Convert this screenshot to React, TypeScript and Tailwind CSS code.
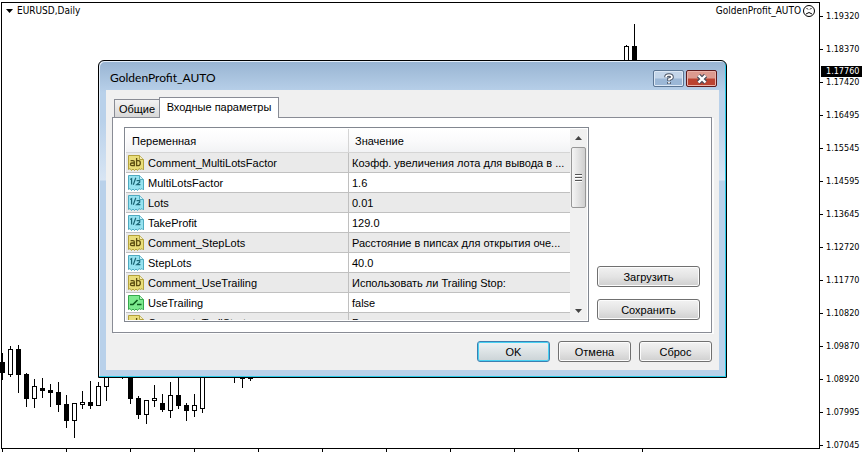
import { useState } from 'react'

type Candle = { x: number; high: number; low: number; top: number; bottom: number; up?: boolean }

const candles: Candle[] = [
  { x: 2, high: 353, low: 379, top: 362, bottom: 372 },
  { x: 10, high: 346, low: 376, top: 349, bottom: 374, up: true },
  { x: 18, high: 345, low: 392, top: 349, bottom: 374 },
  { x: 26, high: 373, low: 406, top: 374, bottom: 398 },
  { x: 34, high: 379, low: 407, top: 386, bottom: 398, up: true },
  { x: 42, high: 378, low: 397, top: 388, bottom: 390 },
  { x: 50, high: 384, low: 406, top: 390, bottom: 392 },
  { x: 58, high: 382, low: 411, top: 392, bottom: 404 },
  { x: 66, high: 395, low: 427, top: 404, bottom: 420 },
  { x: 74, high: 403, low: 437, top: 403, bottom: 420, up: true },
  { x: 82, high: 391, low: 408, top: 402, bottom: 404, up: true },
  { x: 90, high: 381, low: 408, top: 402, bottom: 405 },
  { x: 98, high: 382, low: 405, top: 386, bottom: 405, up: true },
  { x: 106, high: 365, low: 400, top: 370, bottom: 386, up: true },
  { x: 122, high: 360, low: 378, top: 362, bottom: 370 },
  { x: 130, high: 360, low: 403, top: 365, bottom: 398 },
  { x: 138, high: 396, low: 418, top: 398, bottom: 414 },
  { x: 146, high: 400, low: 423, top: 400, bottom: 414, up: true },
  { x: 154, high: 385, low: 406, top: 398, bottom: 400, up: true },
  { x: 162, high: 394, low: 411, top: 403, bottom: 409 },
  { x: 170, high: 382, low: 417, top: 395, bottom: 410, up: true },
  { x: 178, high: 370, low: 408, top: 395, bottom: 405 },
  { x: 186, high: 403, low: 420, top: 405, bottom: 410 },
  { x: 194, high: 394, low: 416, top: 405, bottom: 410, up: true },
  { x: 202, high: 360, low: 412, top: 365, bottom: 408, up: true },
  { x: 234, high: 360, low: 382, top: 362, bottom: 370 },
  { x: 242, high: 360, low: 387, top: 365, bottom: 378 },
  { x: 250, high: 360, low: 380, top: 365, bottom: 378 },
  { x: 626, high: 45, low: 80, top: 46, bottom: 75, up: true },
  { x: 634, high: 24, low: 90, top: 46, bottom: 85 },
]

const prices = [
  '1.19320', '1.18370', '1.17420', '1.16495', '1.15545', '1.14595', '1.13645',
  '1.12720', '1.11770', '1.10820', '1.09870', '1.08920', '1.07995', '1.07045',
]

type Kind = 'text' | 'number' | 'bool'

const params: { kind: Kind; name: string; value: string }[] = [
  { kind: 'text', name: 'Comment_MultiLotsFactor', value: 'Коэфф. увеличения лота для вывода в ...' },
  { kind: 'number', name: 'MultiLotsFactor', value: '1.6' },
  { kind: 'number', name: 'Lots', value: '0.01' },
  { kind: 'number', name: 'TakeProfit', value: '129.0' },
  { kind: 'text', name: 'Comment_StepLots', value: 'Расстояние в пипсах для открытия оче...' },
  { kind: 'number', name: 'StepLots', value: '40.0' },
  { kind: 'text', name: 'Comment_UseTrailing', value: 'Использовать ли Trailing Stop:' },
  { kind: 'bool', name: 'UseTrailing', value: 'false' },
  { kind: 'text', name: 'Comment_TrailStart', value: 'Расстояние' },
]

const uiFont = "font-['Liberation_Sans',Arial,sans-serif]"
const chartFont = "font-['DejaVu_Sans_Condensed','DejaVu_Sans',sans-serif]"

const buttonClass =
  'h-[21px] rounded-[3px] border border-[#707070] bg-linear-to-b from-[#f2f2f2] via-[#e4e4e4] to-[#cfcfcf] text-center text-[11px] leading-[18px] text-black shadow-[inset_0_0_0_1px_#fcfcfc]'

function ParamIcon({ kind }: { kind: Kind }) {
  const fill = { text: '#e9dd7a', number: '#96e2f0', bool: '#7dea8e' }[kind]
  const edge = { text: '#b3a23c', number: '#4fabc0', bool: '#37a94c' }[kind]
  const ink = { text: '#5b4d10', number: '#1a6675', bool: '#0c5c1c' }[kind]
  return (
    <svg width="16" height="16" viewBox="0 0 16 16" className="block" aria-hidden="true">
      <path
        d="M.5.5h11l4 4v10.500l-1.500-1.500-1.500 1-1.500-1-1.500 2-1.500-1.500-1.500 1.500-1.500-1.500-1.500 1.500-1.500-2-1.500 1z"
        fill={fill}
        stroke={edge}
      />
      <path d="M11.500.5v4h4" fill="#fff" fillOpacity=".5" stroke={edge} />
      {kind === 'text' && (
        <g fill="none" stroke={ink} strokeWidth="1.300">
          <path d="M2.600 5.600h2.400q1.300 0 1.300 1.200V10.600H3.800Q2.400 10.600 2.400 9.300T3.800 8h2.500" />
          <path d="M8.600 3v7.600h1.900q1.800 0 1.800-2.500t-1.800-2.500H8.600" />
        </g>
      )}
      {kind === 'number' && (
        <g fill="none" stroke={ink} strokeWidth="1.200">
          <path d="M2.300 4.600 3.600 3.600V9.500M7.800 2.800 5.300 9.800M8.600 5.600h3.100v1.700L8.800 9.600h3.600" />
        </g>
      )}
      {kind === 'bool' && <path d="M2 9.500h3L9.500 5M9 9.500h4.500" fill="none" stroke={ink} strokeWidth="1.600" />}
    </svg>
  )
}

function Chart() {
  return (
    <svg className="absolute inset-0 h-full w-full" shapeRendering="crispEdges" aria-hidden="true">
      {candles.map((c) => (
        <g key={c.x}>
          <rect x={c.x} y={c.high} width="1" height={c.low - c.high + 1} />
          <rect x={c.x - 2} y={c.top} width="5" height={c.bottom - c.top + 1} />
          {c.up && <rect x={c.x - 1} y={c.top + 1} width="3" height={c.bottom - c.top - 1} fill="#fff" />}
        </g>
      ))}
    </svg>
  )
}

function Scrollbar() {
  return (
    <div className="flex w-[17px] shrink-0 flex-col items-center bg-[#f0f0f0]">
      <button type="button" aria-label="Вверх" className="flex h-[18px] w-full items-center justify-center">
        <svg width="7" height="4" viewBox="0 0 7 4">
          <path d="M3.500 0 7 4H0z" fill="#444" />
        </svg>
      </button>
      <div className="flex h-[61px] w-[15px] flex-col items-center justify-center gap-px rounded-[2px] border border-[#979797] bg-linear-to-r from-[#f5f5f5] to-[#cfcfcf]">
        <span className="h-0.5 w-[7px] border-b border-white bg-[#555]" />
        <span className="h-0.5 w-[7px] border-b border-white bg-[#555]" />
        <span className="h-0.5 w-[7px] border-b border-white bg-[#555]" />
      </div>
      <button type="button" aria-label="Вниз" className="mt-auto flex h-[18px] w-full items-center justify-center">
        <svg width="7" height="4" viewBox="0 0 7 4">
          <path d="M0 0h7L3.500 4z" fill="#444" />
        </svg>
      </button>
    </div>
  )
}

function ParamTable() {
  return (
    <div className="flex h-[195px] min-w-0 flex-1 overflow-hidden border border-[#828790] bg-white p-px">
      <div className="min-w-0 flex-1 overflow-hidden">
        <table className="w-full table-fixed border-separate border-spacing-0 text-left text-[11px] leading-4">
          <thead>
            <tr className="h-6 bg-linear-to-b from-white via-[#fafafb] to-[#f1f2f4]">
              <th className="w-[223px] border-r border-b border-[#d5d5d5] pl-1.5 font-normal">Переменная</th>
              <th className="border-b border-[#d5d5d5] pl-1.5 font-normal">Значение</th>
            </tr>
          </thead>
          <tbody>
            {params.map((p) => (
              <tr key={p.name} className="h-5 odd:bg-[#eaeaea]">
                <td className="border-r border-b border-[#c0c0c0] p-0">
                  <div className="flex items-center gap-1 pl-0.5">
                    <ParamIcon kind={p.kind} />
                    <span>{p.name}</span>
                  </div>
                </td>
                <td className="truncate border-b border-[#c0c0c0] p-0 pl-[3px]">{p.value}</td>
              </tr>
            ))}
          </tbody>
        </table>
      </div>
      <Scrollbar />
    </div>
  )
}

function TitleBar() {
  return (
    <div className="flex h-[29px] items-start justify-between pr-0.5 pl-1">
      <h1 className="pt-[9px] font-['Lato',sans-serif] text-[12px] leading-4 text-black">GoldenProfit_AUTO</h1>
      <div className="flex gap-0.5 pt-[9px]">
        <button
          type="button"
          aria-label="Справка"
          className="flex h-[17px] w-[31px] items-center justify-center rounded-[2px] border border-[#5b7593] bg-linear-to-b from-[#c3d5e9] from-45% to-[#9bb7d6] to-55% shadow-[inset_0_0_0_1px_#dce8f5]"
        >
          <svg width="10" height="12" viewBox="0 0 10 12" fill="none">
            <path d="M2 4.200Q2 2 5 2T8 4.200Q8 5.400 5 6.200V8M5 9v2" stroke="#4b5566" strokeWidth="3.600" />
            <path d="M2 4.200Q2 2 5 2T8 4.200Q8 5.400 5 6.200V7.600M5 9v1.600" stroke="#fff" strokeWidth="1.700" />
          </svg>
        </button>
        <button
          type="button"
          aria-label="Закрыть"
          className="flex h-[17px] w-[31px] items-center justify-center rounded-[2px] border border-[#5c1a1c] bg-linear-to-b from-[#dc9a8f] from-45% to-[#bb4331] to-55% shadow-[inset_0_0_0_1px_#eab3aa]"
        >
          <svg width="12" height="10" viewBox="0 0 12 10" fill="none">
            <path d="M2.500 1.500 9.500 8.500M9.500 1.500 2.500 8.500" stroke="#4b4e5c" strokeWidth="4.600" />
            <path d="M2.500 1.500 9.500 8.500M9.500 1.500 2.500 8.500" stroke="#fff" strokeWidth="2.400" />
          </svg>
        </button>
      </div>
    </div>
  )
}

function ParamsDialog() {
  const [tab, setTab] = useState<'common' | 'inputs'>('inputs')

  return (
    <section
      role="dialog"
      aria-label="GoldenProfit_AUTO"
      className={`absolute top-[60px] right-[93px] left-[98px] rounded-t-[6px] border border-black bg-[linear-gradient(180deg,#98b4d2_0,#b9d1ea_32px,#b9d1ea_60px,#d8e5f4_119px,#b9d1ea_120px)] px-[7px] pb-[7px] text-black shadow-[inset_-1px_-1px_0_#27c9e6,inset_1px_1px_0_#e4eef9] ${uiFont}`}
    >
      <TitleBar />
      <div className="bg-[#f0f0f0] pt-[7px] pr-[7px] pb-2 pl-1.5">
        <div role="tablist" className="flex items-end pl-0.5 text-[11px] leading-4">
          <button
            type="button"
            role="tab"
            aria-selected={tab === 'common'}
            onClick={() => setTab('common')}
            className="h-[18px] w-[45px] border border-r-0 border-b-0 border-[#898c95] bg-linear-to-b from-[#f2f2f2] to-[#d8d8d8]"
          >
            Общие
          </button>
          <button
            type="button"
            role="tab"
            aria-selected={tab === 'inputs'}
            onClick={() => setTab('inputs')}
            className="relative -mb-px h-[21px] w-[120px] border border-b-0 border-[#898c95] bg-white pb-0.5"
          >
            Входные параметры
          </button>
        </div>
        <div
          role="tabpanel"
          className="flex gap-2 border border-[#898c95] bg-white px-[11px] pt-[9px] pb-2.5 shadow-[2px_1px_0_#fcfcfc]"
        >
          <ParamTable />
          <div className="flex w-[103px] flex-col justify-end gap-3 pb-0.5">
            <button type="button" className={buttonClass}>Загрузить</button>
            <button type="button" className={buttonClass}>Сохранить</button>
          </div>
        </div>
        <div className="flex justify-end gap-2 pt-2">
          <button
            type="button"
            className="h-[21px] w-[73px] rounded-[3px] border border-[#3c7fb1] bg-linear-to-b from-[#eef3f5] to-[#cbd3d6] text-[11px] leading-[18px] shadow-[inset_0_0_0_1px_#48d1f2]"
          >
            OK
          </button>
          <button type="button" className={`${buttonClass} w-[73px]`}>Отмена</button>
          <button type="button" className={`${buttonClass} w-[73px]`}>Сброс</button>
        </div>
      </div>
    </section>
  )
}

export default function App() {
  return (
    <div className={`flex h-screen w-full overflow-hidden bg-white text-black ${chartFont}`}>
      <main className="relative flex min-w-0 flex-1 flex-col pt-0.5 pl-px">
        <Chart />
        <div className="flex min-h-0 flex-1 justify-between border border-black pr-1 pl-1 text-[10px] leading-4">
          <div className="flex h-4 items-center gap-1">
            <svg width="7" height="4" viewBox="0 0 7 4" aria-hidden="true">
              <path d="M0 0h7L3.500 4z" />
            </svg>
            <span>EURUSD,Daily</span>
          </div>
          <div className="flex h-4 items-center gap-0.5">
            <span>GoldenProfit_AUTO</span>
            <svg width="12" height="12" viewBox="0 0 12 12" fill="none" stroke="#000" aria-hidden="true">
              <circle cx="6" cy="6" r="5.500" />
              <path d="M3 9q3-3 6 0M3.500 3l1.500 1.500M8.500 3 7 4.500" />
            </svg>
          </div>
        </div>
        <div className="flex h-1 overflow-hidden pl-px">
          {Array.from({ length: 11 }, (_, i) => (
            <span key={i} className="h-[3px] w-16 shrink-0 border-l border-black" />
          ))}
        </div>
        <ParamsDialog />
      </main>
      <aside className="relative w-[45px] shrink-0 overflow-hidden text-[9px] leading-[11px]">
        {prices.map((p) => (
          <div key={p} className="flex h-[33px] items-center gap-[3px]">
            <span className="h-px w-[3px] bg-black" />
            <span>{p}</span>
          </div>
        ))}
        <div className="absolute top-[66px] right-[3px] left-px bg-black pl-[5px] text-white">1.17760</div>
      </aside>
    </div>
  )
}
